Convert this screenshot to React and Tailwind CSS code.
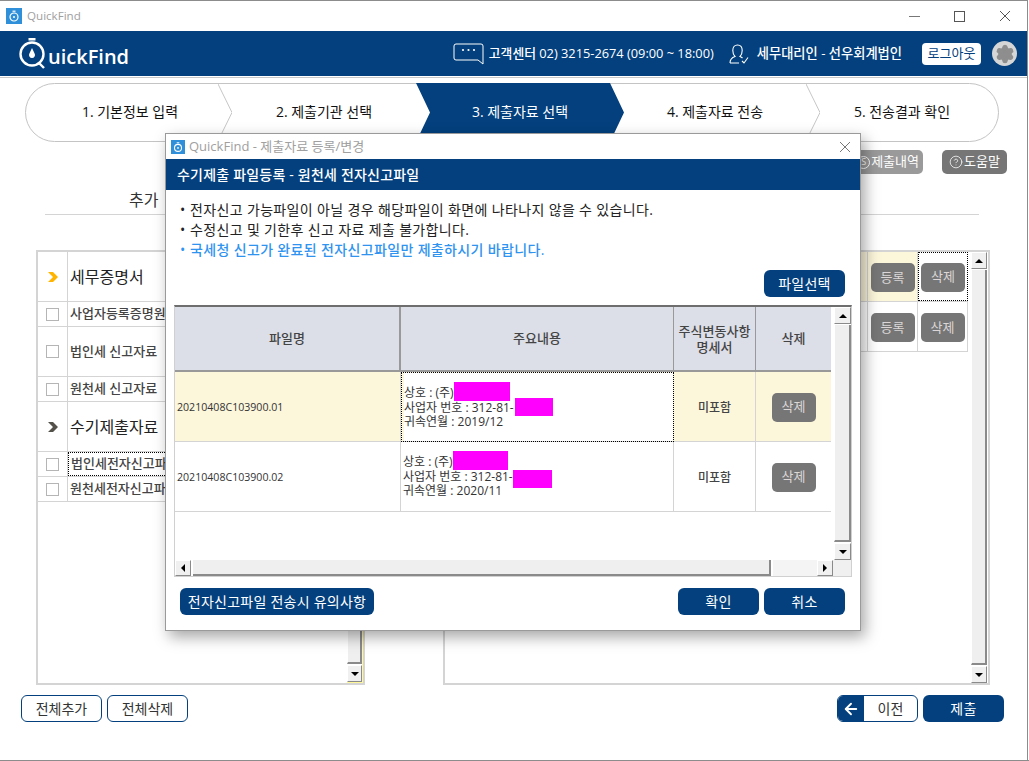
import { ArrowLeft, CircleHelp, Settings } from "lucide-react";

const NAVY = "bg-[#03407d]";

function Arrow({ dir, className = "" }) {
    const points = {
        up: "1,7 9,7 5,3",
        down: "1,3 9,3 5,7",
        left: "7,1 7,9 3,5",
        right: "3,1 3,9 7,5",
    }[dir];
    return (
        <svg viewBox="0 0 10 10" className={`h-[10px] w-[10px] ${className}`}>
            <polygon points={points} fill="#000" />
        </svg>
    );
}

function ScrollBtn({ dir, className = "" }) {
    return (
        <div className={`flex shrink-0 items-center justify-center border border-white border-r-[#8a8a8a] border-b-[#8a8a8a] bg-[#f0f0f0] ${className}`}>
            <Arrow dir={dir} />
        </div>
    );
}

function VScroll({ className = "" }) {
    return (
        <div className={`flex flex-col ${className}`}>
            <ScrollBtn dir="up" className="h-[17px]" />
            <div className="my-px flex-1 border-r-2 border-b-2 border-l border-r-[#8a8a8a] border-b-[#8a8a8a] border-l-white bg-[#efefef]" />
            <ScrollBtn dir="down" className="h-[17px]" />
        </div>
    );
}

function GrayBtn({ children, className = "" }) {
    return (
        <div className={`flex h-[29px] w-[44px] items-center justify-center rounded-[5px] bg-[#767676] text-[13px] text-[#dcd6d6] ${className}`}>
            {children}
        </div>
    );
}

function NavyBtn({ children, className = "" }) {
    return (
        <div className={`flex h-[27px] items-center justify-center rounded-[6px] ${NAVY} text-[14px] tracking-[0.25px] text-white ${className}`}>
            {children}
        </div>
    );
}

function AppIcon({ className = "" }) {
    return (
        <svg viewBox="0 0 16 16" className={className}>
            <rect width="16" height="16" fill="#2f8fd8" />
            <circle cx="8" cy="9" r="4" fill="none" stroke="#fff" strokeWidth="1.2" />
            <rect x="6.5" y="2.6" width="3" height="1.2" fill="#fff" />
            <circle cx="8" cy="9" r="1" fill="#fff" />
        </svg>
    );
}

function Chevron() {
    return (
        <svg viewBox="0 0 14 60" preserveAspectRatio="none" className="absolute top-0 left-full z-10 h-full w-[14px]">
            <polyline points="0,0 14,30 0,60" fill="none" stroke="#c4c4c4" strokeWidth="1" />
        </svg>
    );
}

function Stepper() {
    return (
        <div className="ml-[25px] flex h-[59px] w-[974px] rounded-full border border-[#c4c4c4] pb-0 text-[14px] text-[#111]">
            <div className="relative flex w-[192px] items-center justify-center pb-[2px] pl-[16px]">
                1. 기본정보 입력
                <Chevron />
            </div>
            <div className="relative flex w-[198px] items-center justify-center pb-[2px] pl-[14px]">
                2. 제출기관 선택
            </div>
            <div className="relative flex w-[194px] items-center justify-center pb-[2px] pl-[14px] text-white">
                <div className={`absolute top-[-1px] bottom-[-1px] left-0 w-[208px] ${NAVY} [clip-path:polygon(0_0,194px_0,208px_50%,194px_100%,0_100%,14px_50%)]`} />
                <span className="relative z-10">3. 제출자료 선택</span>
            </div>
            <div className="relative flex w-[196px] items-center justify-center pb-[2px] pl-[14px]">
                4. 제출자료 전송
                <Chevron />
            </div>
            <div className="flex flex-1 items-center justify-center pb-[2px]">
                5. 전송결과 확인
            </div>
        </div>
    );
}

function LeftRow({ h, head, color, focus, children }) {
    return (
        <div className={`flex border-b border-[#d4d4d4] ${h}`}>
            <div className="flex w-[30px] shrink-0 items-center justify-center border-r border-[#d4d4d4]">
                {head ? (
                    <svg viewBox="0 0 12 12" className="h-[12px] w-[12px]">
                        <polygon points="1,1 6,1 11,6 6,11 1,11 6,6" fill={color} />
                    </svg>
                ) : (
                    <div className="h-[13px] w-[13px] border border-[#b5b5b5]" />
                )}
            </div>
            <div className={`flex flex-1 items-center overflow-hidden whitespace-nowrap pl-[2px] ${head ? "text-[16px] text-[#222]" : "text-[13px] font-medium text-[#444]"} ${focus ? "border border-dotted border-black" : ""}`}>
                {children}
            </div>
        </div>
    );
}

function FileRow({ name, bg, focus, lines }) {
    return (
        <div className={`grid h-[70px] grid-cols-[226px_273px_82px_75px] border-b border-[#d4d4d4] ${bg}`}>
            <div className="flex items-center border-r border-[#d4d4d4] pt-[3px] pl-[2px] text-[10.6px] text-[#333]">{name}</div>
            <div className={`flex flex-col justify-center border-r pl-[2px] text-[12px] leading-[14.5px] text-[#333] ${focus ? "-mb-px border-t border-b border-l border-dotted border-black" : "border-[#d4d4d4]"}`}>
                {lines}
            </div>
            <div className="flex items-center justify-center border-r border-[#d4d4d4] pt-[3px] text-[12px] font-medium text-[#444]">미포함</div>
            <div className="flex items-center justify-center pt-[1px]">
                <GrayBtn>삭제</GrayBtn>
            </div>
        </div>
    );
}

function Mask({ className }) {
    return (
        <span className="relative">
            <span className={`absolute bg-[#ff00ff] ${className}`} />
        </span>
    );
}

function Dialog() {
    return (
        <div className="absolute top-[133px] left-[165px] z-20 flex h-[498px] w-[696px] flex-col border border-[#9a9a9a] bg-white shadow-[4px_6px_14px_rgba(0,0,0,0.35)]">
            <div className="flex h-[25px] shrink-0 items-center pl-[5px] text-[13px] text-[#a0a0a0]">
                <AppIcon className="mr-[4px] h-[14px] w-[14px]" />
                QuickFind - 제출자료 등록/변경
                <svg viewBox="0 0 12 12" className="mr-[9px] ml-auto h-[12px] w-[12px]">
                    <path d="M1 1L11 11M11 1L1 11" stroke="#777" strokeWidth="1" />
                </svg>
            </div>
            <div className={`flex h-[31px] shrink-0 items-center ${NAVY} pl-[11px] text-[14px] font-medium tracking-[0.2px] text-white`}>
                수기제출 파일등록 - 원천세 전자신고파일
            </div>
            <div className="mt-[10px] flex flex-col pl-[14px] text-[14px] leading-[20px] tracking-[0.35px] text-[#222]">
                <div className="flex"><span className="w-[10px]">•</span>전자신고 가능파일이 아닐 경우 해당파일이 화면에 나타나지 않을 수 있습니다.</div>
                <div className="flex"><span className="w-[10px]">•</span>수정신고 및 기한후 신고 자료 제출 불가합니다.</div>
                <div className="flex font-medium text-[#2f93f0]"><span className="w-[10px]">•</span>국세청 신고가 완료된 전자신고파일만 제출하시기 바랍니다.</div>
            </div>
            <div className="mt-[10px] flex justify-end pr-[15px]">
                <NavyBtn className="w-[81px]">파일선택</NavyBtn>
            </div>
            <div className="mt-[8px] ml-[8px] flex h-[272px] w-[678px] flex-col border-x border-t-2 border-b border-x-[#d0d0d0] border-t-[#6e6e6e] border-b-[#d0d0d0]">
                <div className="flex min-h-0 flex-1">
                    <div className="w-[656px] shrink-0 overflow-hidden">
                        <div className="grid h-[65px] grid-cols-[226px_273px_82px_75px] border-b-2 border-[#999] bg-[#dcdee8] text-center text-[13px] font-medium text-[#444]">
                            <div className="flex items-center justify-center border-r-2 border-[#999]">파일명</div>
                            <div className="flex items-center justify-center border-r border-[#999]">주요내용</div>
                            <div className="flex items-center justify-center border-r border-[#999] leading-[16px]">
                                주식변동사항
                                <br />
                                명세서
                            </div>
                            <div className="flex items-center justify-center">삭제</div>
                        </div>
                        <FileRow
                            name="20210408C103900.01"
                            bg="bg-[#fcf6db]"
                            focus
                            lines={
                                <div className="flex h-full flex-col justify-center bg-white pt-[2px]">
                                    <div>상호 : (주)<Mask className="top-[-2px] left-0 h-[19px] w-[56px]" /></div>
                                    <div>사업자 번호 : 312-81-<Mask className="top-[-1px] left-[1px] h-[18px] w-[38px]" /></div>
                                    <div>귀속연월 : 2019/12</div>
                                </div>
                            }
                        />
                        <FileRow
                            name="20210408C103900.02"
                            bg="bg-white"
                            lines={
                                <div className="pt-[1px]">
                                    <div>상호 : (주)<Mask className="top-[-2px] left-0 h-[19px] w-[55px]" /></div>
                                    <div>사업자 번호 : 312-81-<Mask className="top-[2px] left-0 h-[18px] w-[39px]" /></div>
                                    <div>귀속연월 : 2020/11</div>
                                </div>
                            }
                        />
                    </div>
                    <VScroll className="ml-[3px] w-[17px]" />
                </div>
                <div className="flex h-[16px] shrink-0">
                    <ScrollBtn dir="left" className="w-[16px]" />
                    <div className="mx-[2px] w-[578px] border-r-2 border-b-2 border-r-[#8a8a8a] border-b-[#8a8a8a] bg-[#efefef]" />
                    <div className="w-[44px] bg-[#f4f4f4]" />
                    <ScrollBtn dir="right" className="w-[16px]" />
                    <div className="flex-1 bg-[#f0f0f0]" />
                </div>
            </div>
            <div className="mt-[11px] flex gap-[5px] pr-[15px] pl-[14px]">
                <NavyBtn className="mr-auto w-[194px]">전자신고파일 전송시 유의사항</NavyBtn>
                <NavyBtn className="w-[81px]">확인</NavyBtn>
                <NavyBtn className="w-[81px]">취소</NavyBtn>
            </div>
        </div>
    );
}

export default function App() {
    return (
        <div className="relative h-[761px] w-[1029px] overflow-hidden bg-white font-['Open_Sans','Noto_Sans_CJK_KR',sans-serif]">
            <div className="flex h-[760px] w-[1028px] flex-col border-t border-r border-[#8c8c8c]">
                {/* Title bar */}
                <div className="flex h-[30px] shrink-0 items-center pl-[6px] text-[11.6px] text-[#a0a0a0]">
                    <AppIcon className="mr-[5px] h-[16px] w-[16px]" />
                    QuickFind
                    <div className="ml-auto flex items-center gap-[34px] pr-[16px]">
                        <div className="h-px w-[11px] bg-[#777]" />
                        <div className="h-[11px] w-[11px] border border-[#555]" />
                        <svg viewBox="0 0 12 12" className="h-[12px] w-[12px]">
                            <path d="M1 1L11 11M11 1L1 11" stroke="#555" strokeWidth="1" />
                        </svg>
                    </div>
                </div>

                {/* Header */}
                <div className={`flex h-[45px] shrink-0 items-center ${NAVY} text-white`}>
                    <div className="ml-[19px] flex items-end">
                        <svg viewBox="0 0 26 31" className="h-[31px] w-[26px]">
                            <rect x="9.5" y="0" width="7" height="2.5" fill="#fff" />
                            <circle cx="13" cy="16" r="11.5" fill="none" stroke="#fff" strokeWidth="2.4" />
                            <path d="M13 10L15.6 15.5A3 3 0 1 1 10.4 15.5Z" fill="#fff" />
                            <path d="M20 25L25 30" stroke="#fff" strokeWidth="2.4" />
                        </svg>
                        <span className="ml-[3px] text-[20px] leading-[24px] font-semibold">uickFind</span>
                    </div>
                    <svg viewBox="0 0 31 22" className="ml-auto h-[22px] w-[31px]">
                        <path d="M3 1H28a2 2 0 0 1 2 2V21L25 17H3a2 2 0 0 1-2-2V3a2 2 0 0 1 2-2Z" fill="none" stroke="#fff" strokeWidth="1" />
                        <circle cx="10" cy="7" r="1.1" fill="#fff" />
                        <circle cx="15.5" cy="7" r="1.1" fill="#fff" />
                        <circle cx="21" cy="7" r="1.1" fill="#fff" />
                    </svg>
                    <span className="ml-[5px] text-[12.8px] font-medium">고객센터 02) 3215-2674 (09:00 ~ 18:00)</span>
                    <svg viewBox="0 0 20 20" className="ml-[15px] h-[20px] w-[20px]">
                        <path d="M1 19C1 15 3 13.5 6 12.5C4.5 11 3.8 9 3.8 6.5C3.8 3 5.8 1 8.5 1S13.2 3 13.2 6.5C13.2 9 12.5 11 11 12.5C12 12.9 12.8 13.3 13.5 14M1 19H10" fill="none" stroke="#fff" strokeWidth="1.1" />
                        <path d="M13 17L15 19L19 13.5" fill="none" stroke="#fff" strokeWidth="1.1" />
                    </svg>
                    <span className="ml-[8px] text-[13.25px] font-medium">세무대리인 - 선우회계법인</span>
                    <div className="ml-[20px] flex h-[22px] w-[59px] items-center justify-center rounded-[4px] bg-white text-[13px] text-[#03407d]">로그아웃</div>
                    <div className="mr-[10px] ml-[11px] flex h-[25px] w-[25px] items-center justify-center rounded-full bg-[#d6d6d6]">
                        <Settings className="h-[20px] w-[20px] fill-[#8e8e8e] text-[#8e8e8e]" strokeWidth={2} />
                    </div>
                </div>
                <div className="mt-px h-px shrink-0 bg-[#c8c8c8]" />

                {/* Steps */}
                <div className="mt-[5px] shrink-0">
                    <Stepper />
                </div>

                {/* Toolbar */}
                <div className="mt-[8px] flex h-[24px] shrink-0 justify-end gap-[19px] pr-[20px] text-[13px] text-white">
                    <div className="flex w-[80px] items-center justify-end gap-px rounded-[5px] bg-[#9a9a9a] pr-[4px]">
                        <span className="flex h-[13px] w-[13px] items-center justify-center rounded-full border border-white text-[9px]">S</span>
                        제출내역
                    </div>
                    <div className="flex w-[65px] items-center justify-center gap-px rounded-[5px] bg-[#767676]">
                        <CircleHelp className="h-[14px] w-[14px]" strokeWidth={1.3} />
                        도움말
                    </div>
                </div>

                {/* Section titles */}
                <div className="mt-[16px] mr-[48px] ml-[45px] flex h-[25px] shrink-0 items-start border-b border-[#d4d4d4] pl-[84px] text-[16px] leading-[20px] text-[#333]">
                    추가
                </div>

                {/* Panels */}
                <div className="mt-[35px] flex h-[435px] shrink-0 pl-[36px]">
                    <div className="flex w-[329px] border-2 border-[#d4d4d4]">
                        <div className="min-w-0 flex-1">
                            <LeftRow h="h-[50px]" head color="#ffb400">세무증명서</LeftRow>
                            <LeftRow h="h-[25px]">사업자등록증명원</LeftRow>
                            <LeftRow h="h-[50px]">법인세 신고자료</LeftRow>
                            <LeftRow h="h-[25px]">원천세 신고자료</LeftRow>
                            <LeftRow h="h-[50px]" head color="#54504a">수기제출자료</LeftRow>
                            <LeftRow h="h-[25px]" focus>법인세전자신고파일</LeftRow>
                            <LeftRow h="h-[25px]">원천세전자신고파일</LeftRow>
                        </div>
                        <VScroll className="w-[16px] border-r border-b border-[#fff79a]" />
                    </div>
                    <div className="ml-[78px] flex w-[547px] border-2 border-[#d4d4d4]">
                        <div className="min-w-0 flex-1">
                            <div className="flex h-[50px] border-b border-[#d4d4d4] bg-[#fcf6db]">
                                <div className="flex-1 border-r border-[#d4d4d4]" />
                                <div className="flex w-[50px] items-center justify-center border-r border-[#d4d4d4] pt-[2px]">
                                    <GrayBtn>등록</GrayBtn>
                                </div>
                                <div className="flex w-[50px] items-center justify-center border border-dotted border-black bg-white pt-[1px]">
                                    <GrayBtn>삭제</GrayBtn>
                                </div>
                            </div>
                            <div className="flex h-[50px] border-b border-[#d4d4d4]">
                                <div className="flex-1 border-r border-[#d4d4d4]" />
                                <div className="flex w-[50px] items-center justify-center border-r border-[#d4d4d4] pt-[2px]">
                                    <GrayBtn>등록</GrayBtn>
                                </div>
                                <div className="flex w-[50px] items-center justify-center border-r border-[#d4d4d4] pt-[2px]">
                                    <GrayBtn>삭제</GrayBtn>
                                </div>
                            </div>
                        </div>
                        <VScroll className="mr-px ml-[3px] w-[16px]" />
                    </div>
                </div>

                {/* Footer */}
                <div className="mt-[10px] flex h-[27px] shrink-0 gap-[5px] pr-[23px] pl-[21px] text-[14px] text-[#333]">
                    <div className="flex w-[81px] items-center justify-center rounded-[6px] border border-[#03407d]">전체추가</div>
                    <div className="flex w-[81px] items-center justify-center rounded-[6px] border border-[#03407d]">전체삭제</div>
                    <div className="ml-auto flex w-[81px] overflow-hidden rounded-[6px] border border-[#03407d]">
                        <div className={`flex w-[26px] items-center justify-center ${NAVY}`}>
                            <ArrowLeft className="h-[18px] w-[18px] text-white" strokeWidth={2.5} />
                        </div>
                        <div className="flex flex-1 items-center justify-center">이전</div>
                    </div>
                    <NavyBtn className="w-[81px]">제출</NavyBtn>
                </div>
            </div>
            <div className="absolute bottom-0 left-0 h-px w-full bg-[#8c8c8c]" />
            <Dialog />
        </div>
    );
}
